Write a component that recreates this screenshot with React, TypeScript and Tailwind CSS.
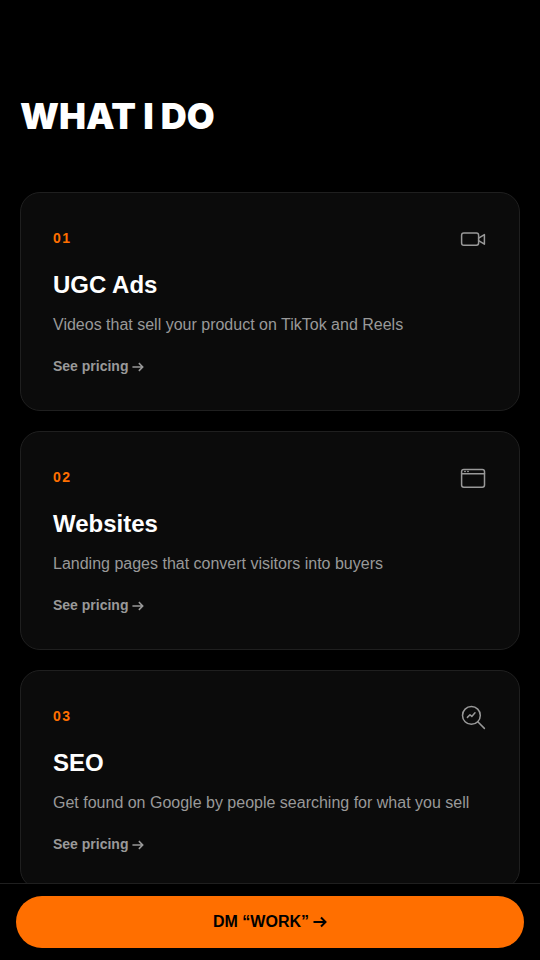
import type { ReactNode } from "react";

interface Service {
    num: string;
    title: string;
    desc: string;
    icon: ReactNode;
}

const services: Service[] = [
    {
        num: "01",
        title: "UGC Ads",
        desc: "Videos that sell your product on TikTok and Reels",
        icon: (
            <>
                <rect x="2.6" y="8" width="17" height="12.3" rx="2.2" />
                <path d="M19.6 13.2 25.4 9.6v9.6l-5.8-3.6" />
            </>
        ),
    },
    {
        num: "02",
        title: "Websites",
        desc: "Landing pages that convert visitors into buyers",
        icon: (
            <>
                <rect x="2.6" y="5.4" width="22.9" height="17.8" rx="2.2" />
                <path d="M2.6 9.8h22.9M5.8 7.6h.4M8.8 7.6h.4" />
            </>
        ),
    },
    {
        num: "03",
        title: "SEO",
        desc: "Get found on Google by people searching for what you sell",
        icon: (
            <>
                <circle cx="12.4" cy="12.4" r="8.9" />
                <path d="m18.8 18.8 6.6 6.6M8.4 14.4l2.6-2.6 1.8 1.6 3.2-3.6" />
            </>
        ),
    },
];

function Arrow({ className = "" }: { className?: string }) {
    return (
        <svg
            viewBox="0 0 14 14"
            className={className}
            fill="none"
            stroke="currentColor"
            aria-hidden="true"
        >
            <path d="M.5 7h12M8 2.5 12.5 7 8 11.5" />
        </svg>
    );
}

function ServiceCard({ num, title, desc, icon }: Service) {
    return (
        <article className="rounded-[20px] border border-[#1f1f1f] bg-[#0b0b0b] px-8 pt-8 pb-[34px]">
            <div className="flex items-start justify-between">
                <span className="text-sm leading-[26px] font-bold tracking-widest text-[#ff6f00]">{num}</span>
                <svg
                    viewBox="0 0 28 28"
                    className="size-7 text-[#999999]"
                    fill="none"
                    stroke="currentColor"
                    strokeWidth="1.5"
                    strokeLinecap="round"
                    strokeLinejoin="round"
                    aria-hidden="true"
                >
                    {icon}
                </svg>
            </div>
            <h3 className="mt-4 text-2xl leading-8 font-bold text-white">{title}</h3>
            <p className="mt-3 text-base leading-6 text-[#999999]">{desc}</p>
            <a href="#pricing" className="mt-5 flex items-center gap-1 text-sm leading-[19px] font-bold text-[#999999]">
                See pricing
                <Arrow className="size-3 stroke-[1.8]" />
            </a>
        </article>
    );
}

export default function App() {
    return (
        <div className="min-h-screen bg-black pb-24 font-['Liberation_Sans',Arial,sans-serif]">
            <main className="px-5 pt-24">
                <h2 className="font-['Inter',sans-serif] text-4xl leading-10 font-black text-white">WHAT I DO</h2>
                <div className="mt-14 grid gap-5">
                    {services.map(service => (
                        <ServiceCard key={service.num} {...service} />
                    ))}
                </div>
            </main>

            <div className="fixed inset-x-0 bottom-0 border-t border-[#1f1f1f] bg-black px-4 py-3">
                <button
                    type="button"
                    className="flex h-13 w-full items-center justify-center gap-1 rounded-full bg-[#ff6f00] text-base font-bold text-black"
                >
                    DM “WORK”
                    <Arrow className="size-3.5 stroke-2" />
                </button>
            </div>
        </div>
    );
}
